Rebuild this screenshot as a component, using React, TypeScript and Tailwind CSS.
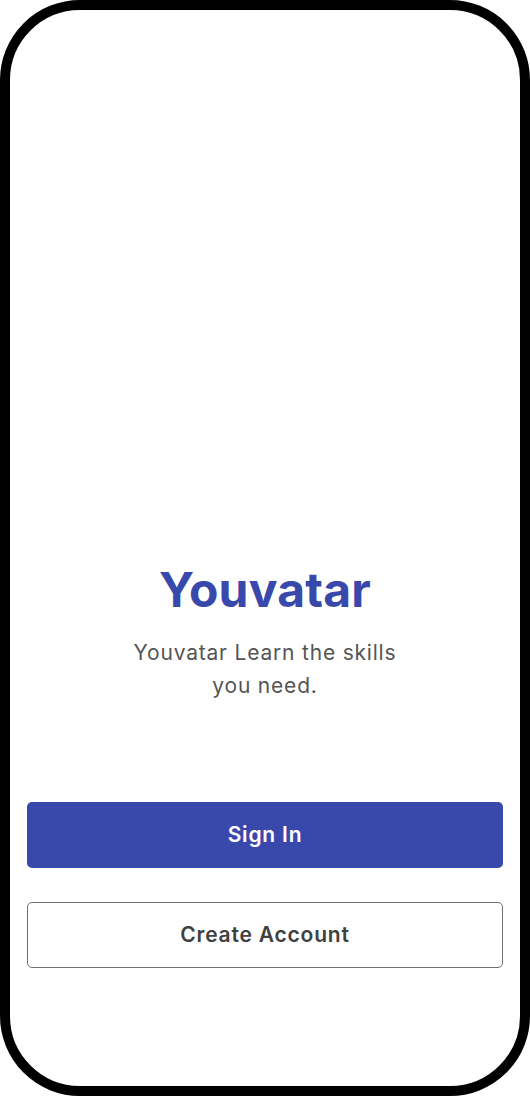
export default function App() {
    return (
        <div className="w-[530px] h-[1096px] bg-white">
            {/* Phone frame */}
            <div className="w-full h-full border-[10px] border-black rounded-[80px] flex flex-col bg-white overflow-hidden">
                <div className="flex-1" />

                {/* Brand */}
                <div className="flex flex-col items-center text-center">
                    <h1 className="font-['Inter',sans-serif] font-bold text-[48px] leading-[56px] text-[#3949ab] tracking-[0.2px]">
                        Youvatar
                    </h1>
                    <p className="mt-[18px] max-w-[285px] font-['Inter',sans-serif] text-[21px] leading-[33px] tracking-[0.8px] text-[#555555]">
                        Youvatar Learn the skills you need.
                    </p>
                </div>

                {/* Actions */}
                <div className="mt-[100px] px-[17px] pb-[118px] flex flex-col gap-[34px]">
                    <button className="h-[66px] w-full rounded-[5px] bg-[#3949ab] text-white font-['Inter',sans-serif] font-semibold text-[21px] tracking-[0.8px]">
                        Sign In
                    </button>
                    <button className="h-[66px] w-full rounded-[5px] border border-[#6e6e6e] bg-white text-[#404040] font-['Inter',sans-serif] font-semibold text-[21px] tracking-[0.8px]">
                        Create Account
                    </button>
                </div>
            </div>
        </div>
    );
}
